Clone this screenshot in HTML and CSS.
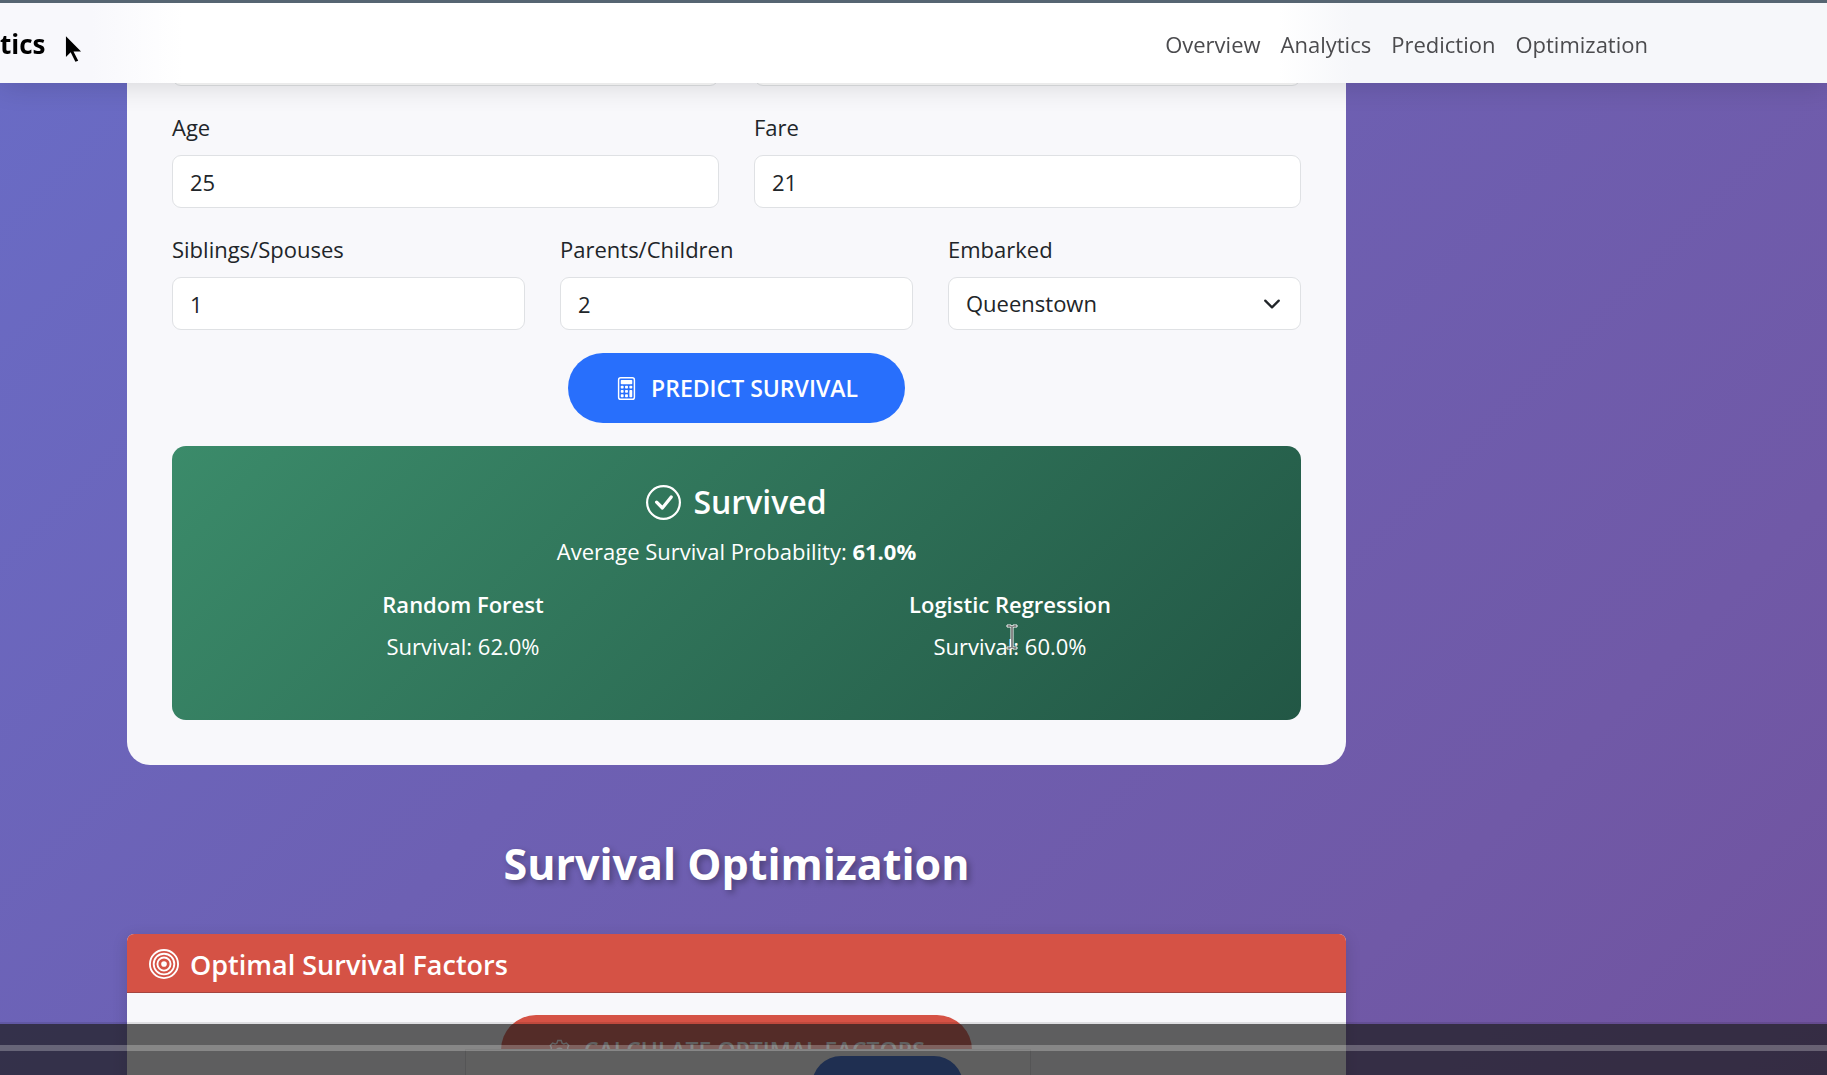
FILE: index.html
```html
<!DOCTYPE html>
<html lang="en">
<head>
<meta charset="utf-8">
<title>Survival Analytics</title>
<link rel="stylesheet" href="styles.css">
</head>
<body>
<header class="navbar">
  <a class="brand" href="#top">tics</a>
  <nav class="nav-links">
    <a href="#overview">Overview</a>
    <a href="#analytics">Analytics</a>
    <a href="#prediction">Prediction</a>
    <a href="#optimization">Optimization</a>
  </nav>
</header>

<main class="page">
  <section class="card" id="prediction">
    <form class="form">
      <div class="row two">
        <select class="control" aria-label="Class"></select>
        <select class="control" aria-label="Sex"></select>
      </div>
      <div class="row two">
        <div class="field"><label for="age">Age</label><input class="control" id="age" type="text" value="25"></div>
        <div class="field"><label for="fare">Fare</label><input class="control" id="fare" type="text" value="21"></div>
      </div>
      <div class="row three">
        <div class="field"><label for="sibsp">Siblings/Spouses</label><input class="control" id="sibsp" type="text" value="1"></div>
        <div class="field"><label for="parch">Parents/Children</label><input class="control" id="parch" type="text" value="2"></div>
        <div class="field"><label for="embarked">Embarked</label>
          <div class="select-wrap">
            <select class="control" id="embarked"><option>Queenstown</option></select>
            <svg class="chevron" viewBox="0 0 16 16" aria-hidden="true"><path d="m2 5 6 6 6-6" fill="none" stroke="#212529" stroke-width="2" stroke-linecap="round" stroke-linejoin="round"/></svg>
          </div>
        </div>
      </div>
      <button class="btn btn-primary" type="button">
        <svg class="btn-icon" viewBox="0 0 16 16" fill="currentColor" aria-hidden="true"><path d="M12 1a1 1 0 0 1 1 1v12a1 1 0 0 1-1 1H4a1 1 0 0 1-1-1V2a1 1 0 0 1 1-1zM4 0a2 2 0 0 0-2 2v12a2 2 0 0 0 2 2h8a2 2 0 0 0 2-2V2a2 2 0 0 0-2-2z"/><path d="M4 2.5a.5.5 0 0 1 .5-.5h7a.5.5 0 0 1 .5.5v2a.5.5 0 0 1-.5.5h-7a.5.5 0 0 1-.5-.5zm0 4a.5.5 0 0 1 .5-.5h1a.5.5 0 0 1 .5.5v1a.5.5 0 0 1-.5.5h-1a.5.5 0 0 1-.5-.5zm0 3a.5.5 0 0 1 .5-.5h1a.5.5 0 0 1 .5.5v1a.5.5 0 0 1-.5.5h-1a.5.5 0 0 1-.5-.5zm0 3a.5.5 0 0 1 .5-.5h1a.5.5 0 0 1 .5.5v1a.5.5 0 0 1-.5.5h-1a.5.5 0 0 1-.5-.5zm3-6a.5.5 0 0 1 .5-.5h1a.5.5 0 0 1 .5.5v1a.5.5 0 0 1-.5.5h-1a.5.5 0 0 1-.5-.5zm0 3a.5.5 0 0 1 .5-.5h1a.5.5 0 0 1 .5.5v1a.5.5 0 0 1-.5.5h-1a.5.5 0 0 1-.5-.5zm0 3a.5.5 0 0 1 .5-.5h1a.5.5 0 0 1 .5.5v1a.5.5 0 0 1-.5.5h-1a.5.5 0 0 1-.5-.5zm3-6a.5.5 0 0 1 .5-.5h1a.5.5 0 0 1 .5.5v1a.5.5 0 0 1-.5.5h-1a.5.5 0 0 1-.5-.5zm0 3a.5.5 0 0 1 .5-.5h1a.5.5 0 0 1 .5.5v4a.5.5 0 0 1-.5.5h-1a.5.5 0 0 1-.5-.5z"/></svg>
        PREDICT SURVIVAL
      </button>
    </form>

    <div class="result">
      <h3 class="verdict">
        <svg class="verdict-icon" viewBox="0 0 16 16" fill="currentColor" aria-hidden="true"><path d="M8 15A7 7 0 1 1 8 1a7 7 0 0 1 0 14m0 1A8 8 0 1 0 8 0a8 8 0 0 0 0 16"/><path d="m10.97 4.97-.02.022-3.473 4.425-2.093-2.094a.75.75 0 0 0-1.06 1.06L6.97 11.03a.75.75 0 0 0 1.079-.02l3.992-4.99a.75.75 0 0 0-1.071-1.05"/></svg>
        Survived
      </h3>
      <p class="average">Average Survival Probability: <strong>61.0%</strong></p>
      <div class="models">
        <div><h4>Random Forest</h4><p>Survival: 62.0%</p></div>
        <div><h4>Logistic Regression</h4><p>Survival: 60.0%</p></div>
      </div>
    </div>
  </section>

  <h2 class="section-title" id="optimization">Survival Optimization</h2>

  <section class="panel">
    <h3 class="panel-head">
      <svg class="panel-icon" viewBox="0 0 32 32" fill="none" stroke="currentColor" stroke-width="2" aria-hidden="true"><circle cx="16" cy="16" r="15"/><circle cx="16" cy="16" r="11"/><circle cx="16" cy="16" r="7"/><circle cx="16" cy="16" r="3" fill="currentColor" stroke="none"/></svg>
      Optimal Survival Factors
    </h3>
    <div class="panel-body">
      <button class="btn btn-danger" type="button">
        <svg class="btn-icon" viewBox="0 0 16 16" fill="none" stroke="currentColor" aria-hidden="true"><path d="M6.8 1.1h2.4l.6 1.8 1.2.6 1.8-.7 1.6 1.7-.8 1.8.4 1.2 1.6.8v1.4l-1.6.8-.4 1.2.8 1.8-1.6 1.6-1.8-.8-1.2.5-.6 1.6H6.8l-.6-1.6-1.2-.5-1.8.8-1.6-1.6.8-1.8L2 10.500.4 9.700V8.300L2 7.500l.4-1.200-.8-1.800 1.600-1.700 1.800.7 1.200-.6z"/><circle cx="8" cy="9" r="2.600"/></svg>
        CALCULATE OPTIMAL FACTORS
      </button>
      <div class="dialog"><button class="dialog-action" type="button" aria-label="OK"></button></div>
    </div>
  </section>
</main>

<div class="player"><div class="track"></div></div>
<svg class="pointer" viewBox="0 0 18 30" aria-hidden="true"><path d="M1 1v22l5-5 5 10 3-1-5-10h8z"/></svg>
<svg class="ibeam" viewBox="0 0 12 26" aria-hidden="true"><path d="M1 1h4v1h2V1h4v2H7v20h4v2H7v-1H5v1H1v-2h4V3H1z" fill="#111" stroke="#fff"/></svg>
</body>
</html>
```

FILE: styles.css
```css
* { box-sizing: border-box; }

body {
  margin: 0;
  height: 100vh;
  overflow: hidden;
  font: 22px/35px "Open Sans", "Noto Sans", sans-serif;
  color: #212529;
  background: linear-gradient(135deg, #696cc6 0%, #6d60b3 45%, #7059a7 80%, #71539f 100%);
}

h2, h3, h4, p { margin: 0; }

.navbar {
  position: fixed;
  inset: 0 0 auto;
  z-index: 2;
  height: 83px;
  display: flex;
  align-items: center;
  justify-content: space-between;
  padding: 3px 179px 0 0;
  border-top: 3px solid #566572;
  background: linear-gradient(90deg, #f8f8fc 5%, #fff 10%, #fff 70%, #f6f7fa 74%);
  box-shadow: 0 3px 28px rgba(0, 0, 0, .14);
}

.brand {
  font-size: 26px;
  font-weight: 700;
  color: #000;
  text-decoration: none;
}

.nav-links { display: flex; gap: 20px; }
.nav-links a { color: #4b4b4e; text-decoration: none; }

.page { padding: 0 481px 0 127px; }

.card {
  padding: 33px 45px 45px;
  border-radius: 0 0 23px 23px;
  background: #f8f8fb;
}

.form { display: grid; gap: 23px; }
.row { display: grid; gap: 35px; }
.two { grid-template-columns: 1fr 1fr; }
.three { grid-template-columns: 1fr 1fr 1fr; }
.field { display: grid; gap: 9px; line-height: 37px; }

.control {
  width: 100%;
  height: 53px;
  padding: 0 17px;
  border: 1px solid #dfe1e4;
  border-radius: 9px;
  background: #fff;
  color: #212529;
  font: inherit;
  appearance: none;
}

.select-wrap { display: grid; align-items: center; }
.select-wrap > * { grid-area: 1 / 1; }
.chevron { width: 18px; justify-self: end; margin-right: 20px; pointer-events: none; }

.btn {
  justify-self: center;
  display: flex;
  align-items: center;
  gap: 13px;
  height: 70px;
  padding: 0 47px;
  border: 0;
  border-radius: 35px;
  color: #fff;
  font: 600 23px/35px "Open Sans", "Noto Sans", sans-serif;
}
.btn-icon { width: 23px; height: 23px; }
.btn-primary { background: #286ffc; }
.btn-danger { background: #d55245; }

.result {
  margin-top: 23px;
  height: 274px;
  padding: 35px;
  border-radius: 14px;
  background: linear-gradient(135deg, #3b8b6a, #225745);
  color: #fff;
  text-align: center;
}

.verdict {
  display: flex;
  justify-content: center;
  align-items: center;
  gap: 12px;
  font-size: 32px;
  line-height: 42px;
  font-weight: 600;
}
.verdict-icon { width: 35px; height: 35px; }
.average { margin-top: 11px; }
.models {
  display: grid;
  grid-template-columns: 1fr 1fr;
  gap: 35px;
  margin-top: 18px;
}
.models h4 { font-size: 22px; font-weight: 600; }
.models p { margin-top: 7px; }

.section-title {
  margin: 70px 0 42px;
  color: #fff;
  font-size: 43px;
  line-height: 57px;
  font-weight: 700;
  text-align: center;
  text-shadow: 3px 3px 6px rgba(0, 0, 0, .3);
}

.panel {
  border-radius: 7px 7px 0 0;
  background: #f8f8fb;
  box-shadow: 0 4px 16px rgba(0, 0, 0, .14);
}
.panel-head {
  display: flex;
  align-items: center;
  gap: 11px;
  height: 59px;
  padding: 2px 22px 0;
  border-bottom: 1px solid #a5453f;
  border-radius: 7px 7px 0 0;
  background: #d55245;
  color: #fff;
  font-size: 27px;
  font-weight: 600;
}
.panel-icon { width: 30px; height: 30px; }
.panel-body {
  position: relative;
  display: grid;
  padding: 22px 22px 60px;
}

.dialog {
  position: absolute;
  top: 56px;
  left: 338px;
  width: 566px;
  height: 90px;
  padding: 6px 67px 0;
  border: 1px solid #d9d9dc;
  background: #fafafb;
  display: flex;
  justify-content: flex-end;
}
.dialog-action {
  width: 151px;
  height: 58px;
  border: 0;
  border-radius: 29px;
  background: #255ccc;
}

.player {
  position: fixed;
  inset: auto 0 0;
  z-index: 3;
  height: 51px;
  padding-top: 21px;
  background: rgba(28, 28, 28, .7);
  box-shadow: 0 -2px 0 rgba(0, 0, 0, .1);
}
.track { height: 6px; background: rgba(255, 255, 255, .25); }

.pointer { position: fixed; z-index: 4; left: 65px; top: 35px; width: 17px; height: 29px; }
.ibeam { position: fixed; z-index: 4; left: 1006px; top: 624px; width: 12px; height: 26px; }
```
